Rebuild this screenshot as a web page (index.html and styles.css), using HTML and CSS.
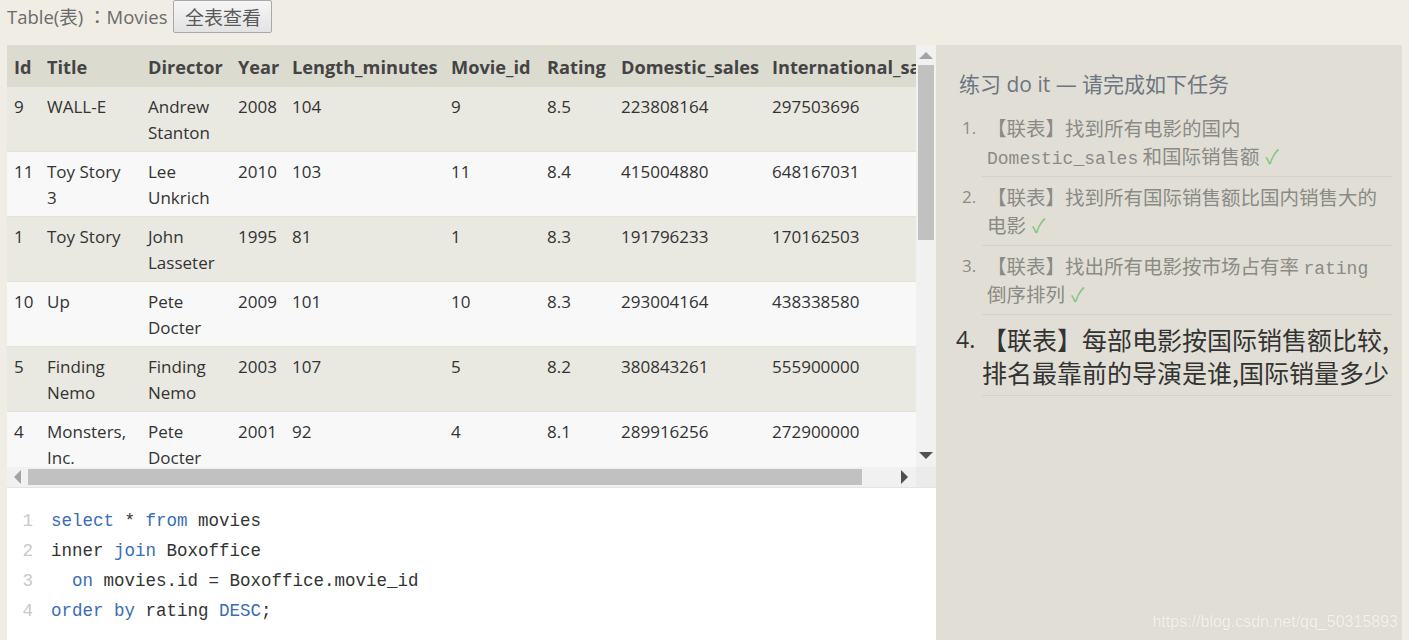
FILE: index.html
```html
<!DOCTYPE html>
<html>
<head>
<meta charset="utf-8">
<link rel="stylesheet" href="styles.css">
</head>
<body>
<div class="page">
  <div class="topbar">
    <span class="title">Table(表) ：Movies</span>
    <button class="btn">全表查看</button>
  </div>
  <div class="main">
    <div class="left">
      <div class="scrollbox">
        <div class="viewport">
          <table class="data">
            <colgroup>
              <col style="width:33px"><col style="width:101px"><col style="width:90px"><col style="width:54px"><col style="width:159px"><col style="width:96px"><col style="width:74px"><col style="width:151px"><col style="width:170px">
            </colgroup>
            <thead>
              <tr><th>Id</th><th>Title</th><th>Director</th><th>Year</th><th>Length_minutes</th><th>Movie_id</th><th>Rating</th><th>Domestic_sales</th><th>International_sales</th></tr>
            </thead>
            <tbody>
              <tr><td>9</td><td>WALL-E</td><td>Andrew Stanton</td><td>2008</td><td>104</td><td>9</td><td>8.5</td><td>223808164</td><td>297503696</td></tr>
              <tr><td>11</td><td>Toy Story 3</td><td>Lee Unkrich</td><td>2010</td><td>103</td><td>11</td><td>8.4</td><td>415004880</td><td>648167031</td></tr>
              <tr><td>1</td><td>Toy Story</td><td>John Lasseter</td><td>1995</td><td>81</td><td>1</td><td>8.3</td><td>191796233</td><td>170162503</td></tr>
              <tr><td>10</td><td>Up</td><td>Pete Docter</td><td>2009</td><td>101</td><td>10</td><td>8.3</td><td>293004164</td><td>438338580</td></tr>
              <tr><td>5</td><td>Finding Nemo</td><td>Finding Nemo</td><td>2003</td><td>107</td><td>5</td><td>8.2</td><td>380843261</td><td>555900000</td></tr>
              <tr><td>4</td><td>Monsters, Inc.</td><td>Pete Docter</td><td>2001</td><td>92</td><td>4</td><td>8.1</td><td>289916256</td><td>272900000</td></tr>
              <tr><td>7</td><td>Ratatouille</td><td>Brad Bird</td><td>2007</td><td>115</td><td>7</td><td>8</td><td>206445654</td><td>417277164</td></tr>
            </tbody>
          </table>
        </div>
        <div class="vbar">
          <div class="arrow up"></div>
          <div class="vthumb"></div>
          <div class="vspace"></div>
          <div class="arrow down"></div>
        </div>
        <div class="hbar">
          <div class="arrow left-a"></div>
          <div class="hthumb"></div>
          <div class="hspace"></div>
          <div class="arrow right-a"></div>
        </div>
        <div class="corner"></div>
      </div>
      <div class="editor">
        <div class="line"><span class="ln">1</span><span class="code"><span class="kw">select</span> * <span class="kw">from</span> movies</span></div>
        <div class="line"><span class="ln">2</span><span class="code">inner <span class="kw">join</span> Boxoffice</span></div>
        <div class="line"><span class="ln">3</span><span class="code">  <span class="kw">on</span> movies.id = Boxoffice.movie_id</span></div>
        <div class="line"><span class="ln">4</span><span class="code"><span class="kw">order</span> <span class="kw">by</span> rating <span class="kw">DESC</span>;</span></div>
      </div>
    </div>
    <div class="right">
      <h3 class="heading">练习 do it — 请完成如下任务</h3>
      <ol class="tasks">
        <li class="done"><span class="num">1.</span><span class="txt">【联表】找到所有电影的国内 <code>Domestic_sales</code> 和国际销售额<span class="check">✓</span></span></li>
        <li class="done"><span class="num">2.</span><span class="txt">【联表】找到所有国际销售额比国内销售大的电影<span class="check">✓</span></span></li>
        <li class="done"><span class="num">3.</span><span class="txt">【联表】找出所有电影按市场占有率 <code>rating</code> 倒序排列<span class="check">✓</span></span></li>
        <li class="current"><span class="num">4.</span><span class="txt">【联表】每部电影按国际销售额比较,排名最靠前的导演是谁,国际销量多少</span></li>
      </ol>
      <div class="watermark">https://blog.csdn.net/qq_50315893</div>
    </div>
  </div>
</div>
</body>
</html>
```

FILE: styles.css
```css
* { box-sizing: border-box; }
html, body { margin: 0; padding: 0; }
body {
  background: #f0ede5;
  font-family: "Open Sans", "Noto Sans CJK SC", sans-serif;
  width: 1409px;
  height: 640px;
  overflow: hidden;
}
.page { display: flex; flex-direction: column; height: 640px; }
.topbar {
  height: 45px;
  display: flex;
  align-items: flex-start;
  padding-left: 7px;
  gap: 6px;
}
.title {
  font-family: "Open Sans", "Noto Sans CJK JP", sans-serif;
  font-size: 18.5px;
  color: #6b6b6b;
  line-height: 34px;
}
.btn {
  height: 33px;
  width: 99px;
  margin: 0;
  padding: 0;
  border: 1px solid #a9a9a9;
  border-radius: 2px;
  background: linear-gradient(#f6f6f6, #e3e3e3);
  font-family: "Noto Sans CJK SC", sans-serif;
  font-size: 19px;
  color: #5a5a5a;
  line-height: 31px;
}
.main { display: flex; flex: 1; min-height: 0; padding-left: 7px; padding-right: 7px; }
.left { width: 929px; display: flex; flex-direction: column; background: #fff; }
.scrollbox {
  display: grid;
  grid-template-columns: 909px 20px;
  grid-template-rows: 422px 20px;
  background: #f8f8f8;
  border-bottom: 1px solid #e4e4e4;
}
.viewport { overflow: hidden; background: #f8f8f8; }
.data {
  border-collapse: collapse;
  table-layout: fixed;
  width: 928px;
  font-size: 17px;
  color: #333;
}
.data th {
  background: #dcdbd0;
  color: #444;
  font-weight: 700;
  font-size: 18.2px;
  text-align: left;
  padding: 9px 7px 7px;
  line-height: 26px;
  white-space: nowrap;
  overflow: hidden;
}
.data td {
  padding: 7px 7px 5px 7px;
  line-height: 26px;
  vertical-align: top;
  border-bottom: 1px solid #e2e1da;
}
.data tbody tr:nth-child(odd) td { background: #e9e8e1; }
.data tbody tr:nth-child(even) td { background: #f8f8f8; }
.vbar {
  background: #f1f1f1;
  display: flex;
  flex-direction: column;
  align-items: center;
  padding: 0 2px;
}
.vthumb { width: 16px; height: 175px; background: #c1c1c1; }
.vspace { flex: 1; }
.hbar {
  background: #f1f1f1;
  display: flex;
  align-items: center;
  padding: 2px 0;
}
.hthumb { width: 834px; height: 16px; background: #c1c1c1; }
.hspace { flex: 1; }
.corner { background: #ebebeb; }
.arrow { width: 0; height: 0; flex: none; }
.up { margin: 7px 0 6px; border-left: 7px solid transparent; border-right: 7px solid transparent; border-bottom: 7px solid #a3a3a3; }
.down { margin: 6px 0 8px; border-left: 7px solid transparent; border-right: 7px solid transparent; border-top: 7px solid #505050; }
.left-a { margin: 0 7px 0 7px; border-top: 7px solid transparent; border-bottom: 7px solid transparent; border-right: 7px solid #a3a3a3; }
.right-a { margin: 0 8px 0 6px; border-top: 7px solid transparent; border-bottom: 7px solid transparent; border-left: 7px solid #505050; }
.editor {
  flex: 1;
  background: #fff;
  padding-top: 18px;
  font-family: "Liberation Mono", "DejaVu Sans Mono", monospace;
  font-size: 17.5px;
}
.line { display: flex; height: 30px; line-height: 30px; white-space: pre; }
.ln { width: 26px; text-align: right; color: #c8c8c8; flex: none; }
.code { padding-left: 18px; color: #333; }
.kw { color: #3a6db5; }
.right {
  flex: 1;
  background: #e1dfd5;
  padding: 23px 10px 0 20px;
  position: relative;
}
.heading {
  margin: 0 0 0 3px;
  font-weight: 400;
  font-size: 21px;
  line-height: 32px;
  color: #6d7582;
  font-family: "Open Sans", "Noto Sans CJK SC", sans-serif;
}
.tasks { list-style: none; margin: 0; padding: 8px 0 0 0; }
.tasks li {
  display: flex;
  margin-left: 26px;
  border-bottom: 1px solid #d4d2c8;
  font-family: "Noto Sans CJK SC", sans-serif;
}
.tasks li.done {
  color: #8a8a86;
  font-size: 19.5px;
  line-height: 28px;
  padding: 6px 0 6px 5px;
}
.tasks li .num {
  font-family: "Open Sans", sans-serif;
  flex: none;
  width: 25px;
  margin-left: -25px;
  font-size: 17px;
  white-space: nowrap;
}
.tasks li .txt { flex: 1; min-width: 0; }
.tasks code {
  font-family: "Liberation Mono", "DejaVu Sans Mono", monospace;
  font-size: 18px;
  line-height: 1;
}
.check { color: #7dc47d; margin-left: 6px; display: inline-block; }
.tasks li.current {
  color: #333;
  font-size: 25px;
  line-height: 33px;
  padding: 8px 0 6px 0;
}
.tasks li.current .num { font-size: 23px; width: 26px; margin-left: -26px; }
.watermark {
  position: absolute;
  right: 4px;
  bottom: 9px;
  font-family: "Liberation Sans", Arial, sans-serif;
  font-size: 16px;
  color: #f4f3ee;
  text-shadow: 0 0 1px #c9c7bd;
}
```
